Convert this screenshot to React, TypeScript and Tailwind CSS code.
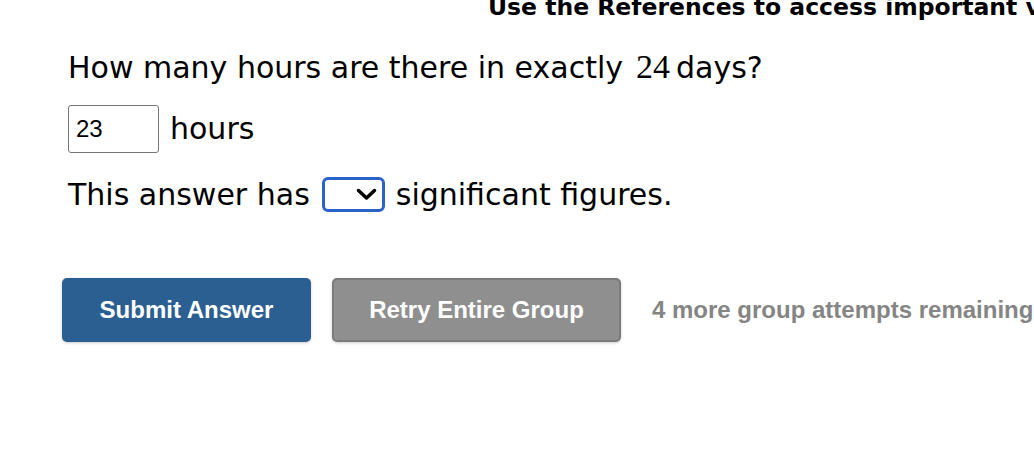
import React from "react";

export default function App() {
  return (
    <div className="w-[1034px] h-[454px] bg-white overflow-hidden text-black">
      <div className="h-[22px] overflow-hidden whitespace-nowrap">
        <div className="pl-[488px] mt-[-7px] text-[23.5px] leading-[28px] font-bold [font-family:'DejaVu_Sans',sans-serif]">
          Use the References to access important values if needed for this question.
        </div>
      </div>
      <div className="pl-[68px] [font-family:'DejaVu_Sans',sans-serif] text-[30px]">
        <div className="mt-[28px] h-[34px] leading-[34px] whitespace-nowrap flex items-baseline">
          <span>How many hours are there in exactly</span>
          <span className="ml-[13px] mr-[6px] [font-family:'Liberation_Serif',serif] text-[34px] leading-none">24</span>
          <span>days?</span>
        </div>
        <div className="mt-[21px] flex items-center">
          <div className="w-[91px] h-[48px] border border-[#767676] rounded-[3px] flex items-center pl-[7px] [font-family:'Liberation_Sans',Arial,sans-serif] text-[24px]">
            23
          </div>
          <span className="ml-[11px] leading-[34px]">hours</span>
        </div>
        <div className="mt-[24px] flex items-center whitespace-nowrap leading-[35px]">
          <span>This answer has</span>
          <div className="ml-[12px] w-[63px] h-[35px] border-[3px] border-[#2b63c6] rounded-[6px] flex items-center justify-end pr-[5px]">
            <svg width="21" height="13" viewBox="0 0 21 13">
              <path d="M2.5 2.5 L10.5 10 L18.5 2.5" fill="none" stroke="#000" strokeWidth="3.5" strokeLinecap="round" strokeLinejoin="round" />
            </svg>
          </div>
          <span className="ml-[11px]">significant figures.</span>
        </div>
      </div>
      <div className="mt-[66px] pl-[62px] flex items-center [font-family:'Liberation_Sans',Arial,sans-serif] font-bold text-[24px] whitespace-nowrap">
        <div className="w-[249px] h-[64px] rounded-[5px] bg-[#2b5f91] text-white flex items-center justify-center shadow-[0_1px_3px_rgba(0,0,0,0.2)]">
          Submit Answer
        </div>
        <div className="ml-[21px] w-[289px] h-[64px] rounded-[5px] bg-[#8f8f8f] border-2 border-[#7b7b7b] text-white flex items-center justify-center shadow-[0_1px_3px_rgba(0,0,0,0.2)]">
          Retry Entire Group
        </div>
        <div className="ml-[31px] text-[#858585]">4 more group attempts remaining</div>
      </div>
    </div>
  );
}
